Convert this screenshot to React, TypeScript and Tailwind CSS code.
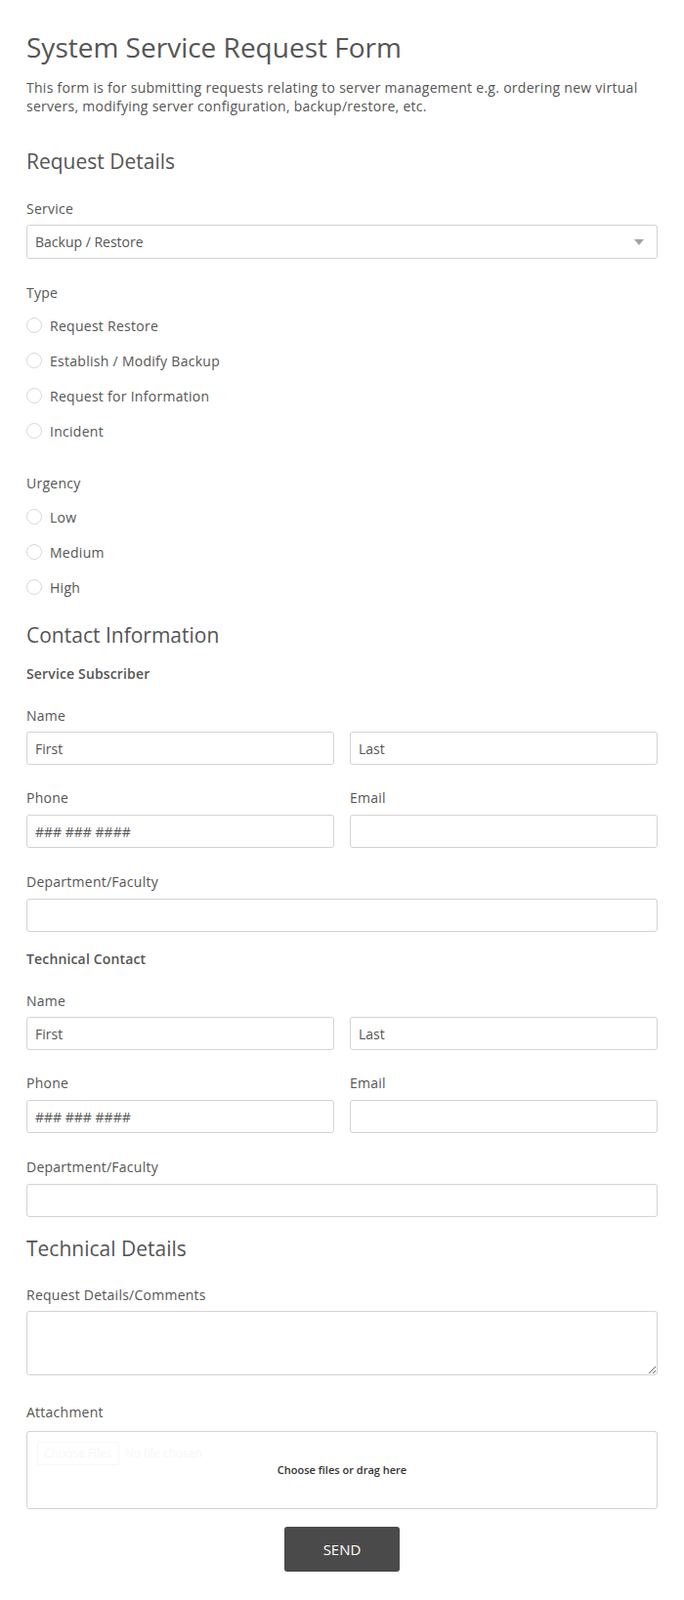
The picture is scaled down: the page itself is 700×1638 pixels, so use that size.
import React from "react"

const label = "block text-[14px] leading-[20px] tracking-[0.25px] text-[#555]"
const input =
  "block w-full h-[34px] rounded-[3px] border border-[#d3d3d3] bg-white px-[8px] text-[14px] text-[#555] placeholder:text-[#555] outline-none"

function Radio({ text }: { text: string }) {
  return (
    <label className="flex h-[36px] items-center gap-[8px] text-[14px] tracking-[0.28px] text-[#555]">
      <span className="block h-[16px] w-[16px] rounded-full border border-[#d9d9d9] bg-white" />
      <span>{text}</span>
    </label>
  )
}

function Field({
  name,
  placeholder,
  className = "mt-[25px]",
}: {
  name: string
  placeholder?: string
  className?: string
}) {
  return (
    <div className={className}>
      <span className={label}>{name}</span>
      <input className={`${input} mt-[7px]`} placeholder={placeholder} />
    </div>
  )
}

function Contact({ title }: { title: string }) {
  return (
    <>
      <h3 className="text-[14px] leading-[20px] font-semibold tracking-[0.15px] text-[#555]">{title}</h3>
      <div className="mt-[23px]">
        <span className={label}>Name</span>
        <div className="mt-[6px] grid grid-cols-2 gap-[16px]">
          <input className={input} placeholder="First" />
          <input className={input} placeholder="Last" />
        </div>
      </div>
      <div className="mt-[24px] grid grid-cols-2 gap-[16px]">
        <div>
          <span className={label}>Phone</span>
          <input className={`${input} mt-[7px]`} placeholder="### ### ####" />
        </div>
        <div>
          <span className={label}>Email</span>
          <input className={`${input} mt-[7px]`} />
        </div>
      </div>
      <Field name="Department/Faculty" />
    </>
  )
}

export default function App() {
  return (
    <div className="min-h-[1638px] bg-white px-[27px] pt-[28px] pb-[33px] font-['Open_Sans',sans-serif] text-[#555]">
      <h1 className="text-[28px] leading-[40px] font-normal text-[#555]">System Service Request Form</h1>
      <p className="mt-[12px] text-[14px] leading-[19px] tracking-[0.28px]">
        This form is for submitting requests relating to server management e.g. ordering new virtual servers,
        modifying server configuration, backup/restore, etc.
      </p>

      <h2 className="mt-[32px] text-[21px] leading-[30px]">Request Details</h2>
      <div className="mt-[24px]">
        <span className={label}>Service</span>
        <div className="relative mt-[6px]">
          <select
            className={`${input} h-[35px] appearance-none`}
            defaultValue="Backup / Restore"
          >
            <option>Backup / Restore</option>
            <option>Virtual Server</option>
          </select>
          <svg
            className="pointer-events-none absolute right-[14px] top-[15px]"
            width="10"
            height="6"
            viewBox="0 0 10 6"
          >
            <path d="M0 0h10L5 6z" fill="#a3a3a3" />
          </svg>
        </div>
      </div>

      <div className="mt-[25px]">
        <span className={label}>Type</span>
        <div className="mt-[5px]">
          <Radio text="Request Restore" />
          <Radio text="Establish / Modify Backup" />
          <Radio text="Request for Information" />
          <Radio text="Incident" />
        </div>
      </div>

      <div className="mt-[26px]">
        <span className={label}>Urgency</span>
        <div className="mt-[6px]">
          <Radio text="Low" />
          <Radio text="Medium" />
          <Radio text="High" />
        </div>
      </div>

      <h2 className="mt-[16px] mb-[15px] text-[21px] leading-[30px]">Contact Information</h2>
      <Contact title="Service Subscriber" />
      <div className="mt-[18px]">
        <Contact title="Technical Contact" />
      </div>

      <h2 className="mt-[17px] text-[21px] leading-[30px]">Technical Details</h2>
      <div className="mt-[23px]">
        <span className={label}>Request Details/Comments</span>
        <textarea className="mt-[6px] block h-[66px] w-full rounded-[3px] border border-[#d3d3d3] bg-white px-[8px] py-[6px] text-[14px] outline-none" />
      </div>

      <div className="mt-[28px]">
        <span className={label}>Attachment</span>
        <div className="relative mt-[9px] flex h-[80px] items-center justify-center rounded-[3px] border border-[#d3d3d3] bg-white">
          <div className="absolute left-[10px] top-[10px] flex items-center gap-[6px] text-[12px] text-[#f7f7f7]">
            <span className="rounded-[2px] border border-[#f7f7f7] px-[6px] py-[2px]">Choose Files</span>
            <span>No file chosen</span>
          </div>
          <span className="text-[11px] font-semibold text-[#333]">Choose files or drag here</span>
        </div>
      </div>

      <div className="mt-[18px] flex justify-center">
        <button className="h-[46px] w-[118px] rounded-[3px] bg-[#4a4a4a] text-[15px] text-white uppercase">
          Send
        </button>
      </div>
    </div>
  )
}
